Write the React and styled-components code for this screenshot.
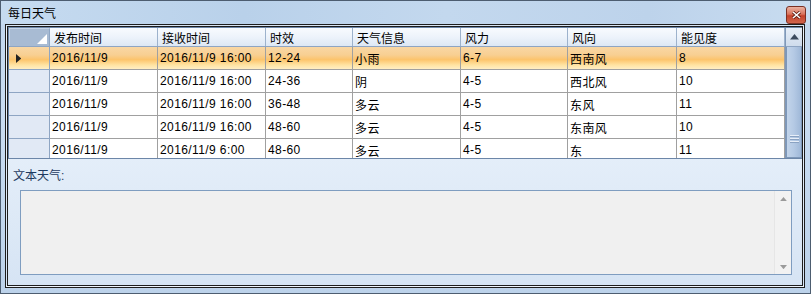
import styled, { createGlobalStyle } from "styled-components";

const GlobalStyle = createGlobalStyle`
  html, body {
    margin: 0;
    padding: 0;
    background: #ffffff;
  }
  * {
    box-sizing: border-box;
  }
`;

const FONT = `"Liberation Sans", "Noto Sans CJK SC", sans-serif`;
const COLUMNS = "41px 108px 108px 87px 108px 107px 109px 108px";

const Window = styled.div`
    width: 811px;
    height: 294px;
    border: 1px solid #4d5d70;
    background: linear-gradient(180deg, #c2d7ee 0%, #c9dcf1 40%, #bcd2ea 100%);
    display: flex;
    flex-direction: column;
    font-family: ${FONT};
    font-size: 12px;
    color: #000;
`;

const TitleBar = styled.div`
    height: 23px;
    display: flex;
    align-items: center;
    justify-content: space-between;
    padding: 0 4px 0 7px;
    background: linear-gradient(90deg, #c6dbf0 0%, #b9d1ea 30%, #c3d8ee 55%, #bdd3eb 80%, #c8dcf0 100%);
`;

const Title = styled.div`
    font-size: 12px;
    color: #000;
    margin-top: -1px;
`;

const CloseButton = styled.div`
    width: 20px;
    height: 18px;
    margin-top: 4px;
    border: 1px solid #7a3024;
    border-radius: 3px;
    background: linear-gradient(180deg, #eab2a2 0%, #d9735c 45%, #c4412a 55%, #d0654c 100%);
    display: flex;
    align-items: center;
    justify-content: center;
`;

const Client = styled.div`
    flex: 1;
    margin: 0 5px 5px 4px;
    border: 3px double #1d1d1d;
    background: linear-gradient(180deg, #edf4fc 0%, #e4eef9 50%, #d6e4f4 100%);
    display: flex;
    flex-direction: column;
`;

const GridWrap = styled.div`
    display: flex;
    height: 132px;
    border-top: 1px solid #6c86a8;
    border-bottom: 1px solid #6c86a8;
    border-left: 1px solid #6c86a8;
    background: #fff;
`;

const Table = styled.div`
    width: 776px;
    display: flex;
    flex-direction: column;
`;

const HeaderRow = styled.div`
    display: grid;
    grid-template-columns: ${COLUMNS};
    height: 19px;
    background: linear-gradient(180deg, #f8fbfe 0%, #edf3fb 50%, #dde8f5 100%);
    border-bottom: 1px solid #8ea5c3;
`;

const HeaderCell = styled.div`
    border-right: 1px solid #9db2cc;
    padding-left: 4px;
    display: flex;
    align-items: center;
    white-space: nowrap;
    font-size: 12px;
`;

const Corner = styled.div`
    border-right: 1px solid #8ea5c3;
    background: #a8bbd3;
    border-top: 1px solid #c7d5e6;
    border-left: 1px solid #c7d5e6;
    display: flex;
    align-items: flex-end;
    justify-content: flex-end;
    padding: 0 2px 2px 0;
`;

const Body = styled.div`
    height: 111px;
    overflow: hidden;
`;

const Row = styled.div`
    display: grid;
    grid-template-columns: ${COLUMNS};
    height: 23px;
    background: ${(p) =>
      p.$selected
        ? "linear-gradient(180deg, #f9d7a4 0%, #f8cf92 35%, #fcc46c 55%, #ffe3a2 78%, #fff1cc 100%)"
        : "#ffffff"};
`;

const RowHeader = styled.div`
    border-right: 1px solid #8ea5c3;
    border-bottom: 1px solid #8ea5c3;
    background: ${(p) => (p.$selected ? "transparent" : "#e1e9f5")};
    display: flex;
    align-items: center;
    padding-left: 7px;
`;

const Cell = styled.div`
    border-right: 1px solid #a0a0a0;
    border-bottom: 1px solid #a0a0a0;
    padding-left: 2px;
    display: flex;
    align-items: center;
    white-space: nowrap;
    overflow: hidden;
    font-size: 12px;
    letter-spacing: 0.4px;
`;

const ScrollBar = styled.div`
    width: 17px;
    display: flex;
    flex-direction: column;
    border-left: 1px solid #7f98b8;
`;

const ScrollButton = styled.div`
    height: 19px;
    background: linear-gradient(180deg, #e6eef8 0%, #cfdcec 100%);
    border-bottom: 1px solid #8ea5c3;
    display: flex;
    align-items: center;
    justify-content: center;
`;

const Thumb = styled.div`
    flex: 1;
    background: linear-gradient(90deg, #c2d4ea 0%, #b4c9e4 50%, #9fb8d8 100%);
    border: 1px solid #7d97b8;
    border-top: none;
    display: flex;
    flex-direction: column;
    align-items: center;
    padding-top: 88px;
    gap: 2px;
`;

const GripLine = styled.div`
    width: 9px;
    height: 1px;
    background: #e7eef8;
    box-shadow: 0 1px 0 #8aa2c2;
`;

const Label = styled.div`
    height: 31px;
    padding-left: 5px;
    display: flex;
    align-items: center;
    color: #1e3a5f;
    font-size: 12px;
`;

const TextBox = styled.div`
    height: 85px;
    margin: 0 10px 0 12px;
    border: 1px solid #7f9dc0;
    background: #f0f0f0;
    display: flex;
    justify-content: flex-end;
`;

const TextScroll = styled.div`
    width: 17px;
    background: #f2f2f2;
    border-left: 1px solid #e6e6e6;
    display: flex;
    flex-direction: column;
    justify-content: space-between;
    align-items: center;
    padding: 6px 0 5px;
`;

const rows = [
  ["2016/11/9", "2016/11/9 16:00", "12-24", "小雨", "6-7", "西南风", "8"],
  ["2016/11/9", "2016/11/9 16:00", "24-36", "阴", "4-5", "西北风", "10"],
  ["2016/11/9", "2016/11/9 16:00", "36-48", "多云", "4-5", "东风", "11"],
  ["2016/11/9", "2016/11/9 16:00", "48-60", "多云", "4-5", "东南风", "10"],
  ["2016/11/9", "2016/11/9 6:00", "48-60", "多云", "4-5", "东", "11"],
];

const headers = ["发布时间", "接收时间", "时效", "天气信息", "风力", "风向", "能见度"];

function Triangle({ dir, color, size = 7 }) {
  const s = size;
  const pts =
    dir === "up"
      ? `0,${s * 0.6} ${s / 2},0 ${s},${s * 0.6}`
      : dir === "down"
      ? `0,0 ${s / 2},${s * 0.6} ${s},0`
      : `0,0 ${s * 0.6},${s / 2} 0,${s}`;
  const w = dir === "right" ? s * 0.6 : s;
  const h = dir === "right" ? s : s * 0.6;
  return (
    <svg width={w} height={h} viewBox={`0 0 ${w} ${h}`}>
      <polygon points={pts} fill={color} />
    </svg>
  );
}

function App() {
  return (
    <>
      <GlobalStyle />
      <Window>
        <TitleBar>
          <Title>每日天气</Title>
          <CloseButton>
            <svg width="9" height="8" viewBox="0 0 9 8">
              <path d="M1 1 L8 7 M8 1 L1 7" stroke="#5a1a10" strokeWidth="3" />
              <path d="M1 1 L8 7 M8 1 L1 7" stroke="#ffffff" strokeWidth="1.6" />
            </svg>
          </CloseButton>
        </TitleBar>
        <Client>
          <GridWrap>
            <Table>
              <HeaderRow>
                <Corner>
                  <svg width="10" height="10" viewBox="0 0 10 10">
                    <polygon points="10,0 10,10 0,10" fill="#ffffff" />
                  </svg>
                </Corner>
                {headers.map((h) => (
                  <HeaderCell key={h}>{h}</HeaderCell>
                ))}
              </HeaderRow>
              <Body>
                {rows.map((r, i) => (
                  <Row key={i} $selected={i === 0}>
                    <RowHeader $selected={i === 0}>
                      {i === 0 && <Triangle dir="right" color="#222" size={9} />}
                    </RowHeader>
                    {r.map((c, j) => (
                      <Cell key={j}>{c}</Cell>
                    ))}
                  </Row>
                ))}
              </Body>
            </Table>
            <ScrollBar>
              <ScrollButton>
                <Triangle dir="up" color="#3b4a5e" size={9} />
              </ScrollButton>
              <Thumb>
                <GripLine />
                <GripLine />
                <GripLine />
              </Thumb>
            </ScrollBar>
          </GridWrap>
          <Label>文本天气:</Label>
          <TextBox>
            <TextScroll>
              <Triangle dir="up" color="#9a9a9a" size={7} />
              <Triangle dir="down" color="#9a9a9a" size={7} />
            </TextScroll>
          </TextBox>
        </Client>
      </Window>
    </>
  );
}

export default App;
